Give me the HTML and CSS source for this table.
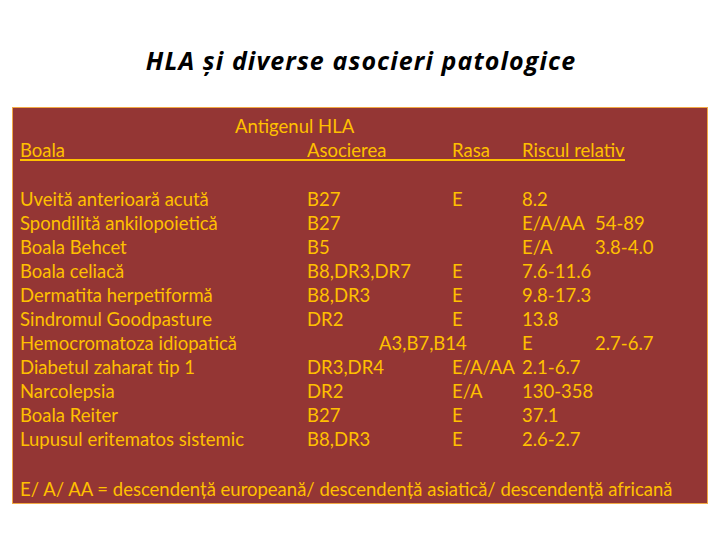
FILE: index.html
```html
<!DOCTYPE html>
<html lang="ro">
<head>
<meta charset="utf-8">
<title>HLA și diverse asocieri patologice</title>
<link rel="stylesheet" href="styles.css">
</head>
<body>
<h1 class="title">HLA și diverse asocieri patologice</h1>
<div class="box">
  <div class="head">
    <div class="head-top">Antigenul HLA</div>
    <div class="head-row">
      <span>Boala</span><span>Asocierea</span><span>Rasa</span><span>Riscul relativ</span>
    </div>
  </div>
  <div class="rows">
    <div class="row"><span>Uveită anterioară acută</span><span>B27</span><span>E</span><span>8.2</span><span></span></div>
    <div class="row"><span>Spondilită ankilopoietică</span><span>B27</span><span></span><span>E/A/AA</span><span>54-89</span></div>
    <div class="row"><span>Boala Behcet</span><span>B5</span><span></span><span>E/A</span><span>3.8-4.0</span></div>
    <div class="row"><span>Boala celiacă</span><span>B8,DR3,DR7</span><span>E</span><span>7.6-11.6</span><span></span></div>
    <div class="row"><span>Dermatita herpetiformă</span><span>B8,DR3</span><span>E</span><span>9.8-17.3</span><span></span></div>
    <div class="row"><span>Sindromul Goodpasture</span><span>DR2</span><span>E</span><span>13.8</span><span></span></div>
    <div class="row"><span>Hemocromatoza idiopatică</span><span class="span2 shifted">A3,B7,B14</span><span>E</span><span>2.7-6.7</span></div>
    <div class="row"><span>Diabetul zaharat tip 1</span><span>DR3,DR4</span><span>E/A/AA</span><span>2.1-6.7</span><span></span></div>
    <div class="row"><span>Narcolepsia</span><span>DR2</span><span>E/A</span><span>130-358</span><span></span></div>
    <div class="row"><span>Boala Reiter</span><span>B27</span><span>E</span><span>37.1</span><span></span></div>
    <div class="row"><span>Lupusul eritematos sistemic</span><span>B8,DR3</span><span>E</span><span>2.6-2.7</span><span></span></div>
  </div>
  <p class="note">E/ A/ AA = descendență europeană/ descendență asiatică/ descendență africană</p>
</div>
</body>
</html>
```
FILE: styles.css
```css
html, body {
  margin: 0;
  padding: 0;
  background: #ffffff;
}
body {
  width: 720px;
  height: 540px;
  padding: 0 12px;
  box-sizing: border-box;
  font-family: Lato, "Open Sans", sans-serif;
}
.title {
  margin: 0;
  padding-top: 43px;
  height: 107px;
  box-sizing: border-box;
  text-align: center;
  font-family: "Open Sans", Lato, sans-serif;
  font-size: 25px;
  letter-spacing: 1.1px;
  font-weight: bold;
  font-style: italic;
  line-height: 34px;
  color: #000000;
  padding-left: 2px;
}
.box {
  height: 397px;
  box-sizing: border-box;
  background: #943634;
  border: 1px solid #f2a944;
  padding: 6px 7px 0 7px;
  color: #ffc000;
  font-size: 18.5px;
  line-height: 24px;
}
.head-top {
  padding-left: 215px;
}
.row,
.head-row {
  display: grid;
  grid-template-columns: 287px 145px 70px 73px 1fr;
  white-space: nowrap;
}
.head-row {
  grid-template-columns: 287px 145px 70px auto;
  width: max-content;
  height: 21px;
  border-bottom: 2px solid #ffc000;
}
.span2 {
  grid-column: span 2;
}
.shifted {
  padding-left: 72px;
}
.rows {
  margin-top: 26px;
}
.note {
  margin: 26px 0 0 0;
  white-space: nowrap;
}
```
